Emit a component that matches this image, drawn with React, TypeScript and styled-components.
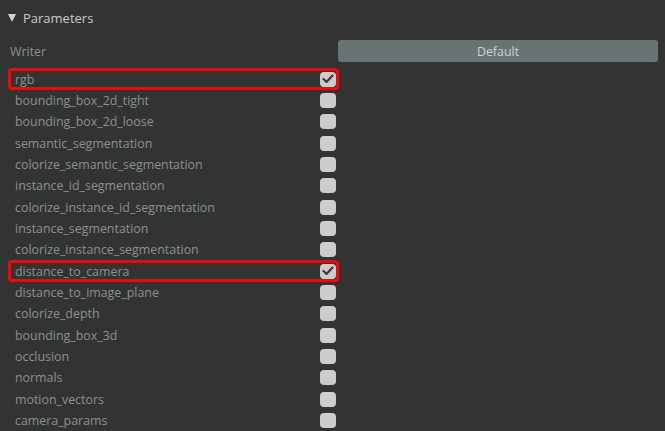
import React from "react";
import styled, { createGlobalStyle } from "styled-components";

const Global = createGlobalStyle`
  html, body { margin: 0; padding: 0; background: #323433; }
  body { font-family: "Open Sans", "DejaVu Sans", sans-serif; }
`;

const Page = styled.div`
  width: 665px;
  height: 431px;
  overflow: hidden;
  background: #323433;
  display: flex;
  flex-direction: column;
`;

const Header = styled.div`
  height: 36px;
  display: flex;
  align-items: center;
  gap: 7px;
  padding-left: 8px;
  color: #c9cbcb;
  font-size: 13px;
`;

const Triangle = styled.span`
  width: 0;
  height: 0;
  border-left: 4px solid transparent;
  border-right: 4px solid transparent;
  border-top: 8px solid #d0d2d2;
  margin-top: 1px;
`;

const WriterRow = styled.div`
  margin-top: 5px;
  height: 22px;
  display: flex;
  align-items: center;
  padding-left: 10px;
  padding-right: 7px;
`;

const WriterLabel = styled.span`
  width: 328px;
  color: #8c9090;
  font-size: 12.4px;
`;

const DefaultButton = styled.div`
  flex: 1;
  height: 22px;
  border-radius: 3px;
  background: #687474;
  color: #ccd1d1;
  font-size: 12.4px;
  display: flex;
  align-items: center;
  justify-content: center;
`;

const List = styled.div`
  margin-top: 6px;
  margin-left: 8px;
  width: 331px;
  display: flex;
  flex-direction: column;
`;

const Row = styled.div<{ $hl?: boolean }>`
  height: 21.33px;
  flex: none;
  box-sizing: border-box;
  display: flex;
  align-items: center;
  justify-content: space-between;
  padding-left: 7px;
  padding-right: 3px;
  border-radius: 4px;
  box-shadow: ${(p) => (p.$hl ? "inset 0 0 0 3px #ff0000" : "none")};
`;

const Label = styled.span`
  color: #8c9090;
  font-size: 12.4px;
`;

const Box = styled.div`
  width: 16px;
  height: 15px;
  border-radius: 4px;
  background: #cdcdcd;
  display: flex;
  align-items: center;
  justify-content: center;
`;

const items: [string, boolean][] = [
  ["rgb", true],
  ["bounding_box_2d_tight", false],
  ["bounding_box_2d_loose", false],
  ["semantic_segmentation", false],
  ["colorize_semantic_segmentation", false],
  ["instance_id_segmentation", false],
  ["colorize_instance_id_segmentation", false],
  ["instance_segmentation", false],
  ["colorize_instance_segmentation", false],
  ["distance_to_camera", true],
  ["distance_to_image_plane", false],
  ["colorize_depth", false],
  ["bounding_box_3d", false],
  ["occlusion", false],
  ["normals", false],
  ["motion_vectors", false],
  ["camera_params", false],
];

const Check = () => (
  <svg width="12" height="10" viewBox="0 0 12 10">
    <path d="M1.5 5 L4.5 8 L10.5 1.5" fill="none" stroke="#383a3a" strokeWidth="2.2" strokeLinecap="round" strokeLinejoin="round" />
  </svg>
);

export default function App() {
  return (
    <Page>
      <Global />
      <Header>
        <Triangle />
        <span>Parameters</span>
      </Header>
      <WriterRow>
        <WriterLabel>Writer</WriterLabel>
        <DefaultButton>Default</DefaultButton>
      </WriterRow>
      <List>
        {items.map(([name, on]) => (
          <Row key={name} $hl={on}>
            <Label>{name}</Label>
            <Box>{on && <Check />}</Box>
          </Row>
        ))}
      </List>
    </Page>
  );
}
